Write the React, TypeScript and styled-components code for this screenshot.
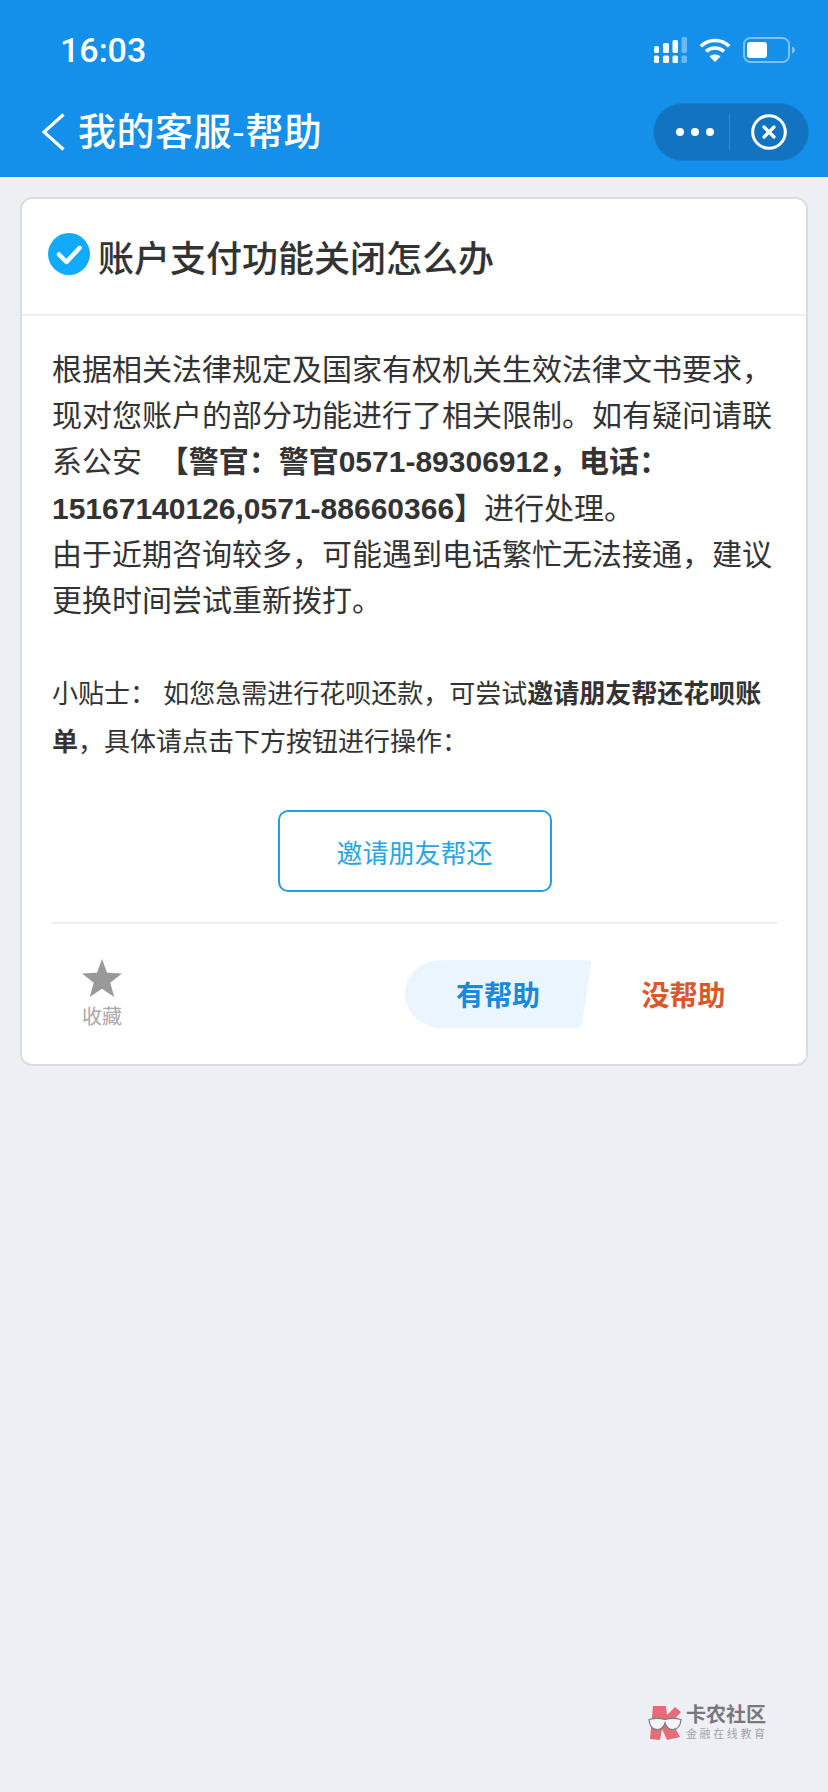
import styled, { createGlobalStyle } from 'styled-components';

const GlobalStyle = createGlobalStyle`
  html, body {
    margin: 0;
    padding: 0;
    background-color: #eeeff5;
  }
  * {
    box-sizing: border-box;
  }
`;

const FONT = `"Liberation Sans", "Noto Sans CJK SC", sans-serif`;

const Page = styled.div`
  position: relative;
  width: 828px;
  height: 1792px;
  overflow: hidden;
  background-color: #eeeff5;
  font-family: ${FONT};
  color: #333333;
`;

const Header = styled.header`
  height: 177px;
  background-color: #1490ea;
  color: #ffffff;
`;

const StatusBar = styled.div`
  height: 100px;
  display: flex;
  align-items: center;
  justify-content: space-between;
  padding: 0 33px 0 60px;
`;

const Time = styled.span`
  font-family: Roboto, sans-serif;
  font-size: 34px;
  font-weight: 500;
`;

const StatusIcons = styled.div`
  display: flex;
  align-items: center;
  gap: 12px;
`;

const NavBar = styled.div`
  height: 77px;
  display: flex;
  align-items: flex-start;
  justify-content: space-between;
  padding: 3px 19px 0 41px;
`;

const NavLeft = styled.div`
  display: flex;
  align-items: center;
  gap: 13px;
  height: 58px;
`;

const NavTitle = styled.h1`
  margin: 0;
  font-size: 38px;
  font-weight: 500;
  letter-spacing: 0.5px;
  line-height: 58px;
`;

const Capsule = styled.div`
  width: 156px;
  height: 58px;
  display: flex;
  align-items: center;
  border-radius: 29px;
  background-color: #1273c1;
  border: 1px solid #1782d6;
`;

const DotsButton = styled.div`
  width: 76px;
  height: 36px;
  display: flex;
  align-items: center;
  justify-content: center;
  gap: 7px;
  padding-left: 7px;
  border-right: 1px solid #2a86cf;
`;

const Dot = styled.i`
  width: 8px;
  height: 8px;
  border-radius: 50%;
  background-color: #ffffff;
`;

const CloseButton = styled.div`
  flex: 1;
  display: flex;
  align-items: center;
  justify-content: center;
`;

const Card = styled.main`
  margin: 20px 20px 0 20px;
  border: 2px solid #dcdde2;
  border-radius: 12px;
  background-color: #ffffff;
`;

const CardTitle = styled.div`
  height: 117px;
  display: flex;
  align-items: center;
  gap: 8px;
  padding: 0 0 2px 26px;
  border-bottom: 2px solid #eeeeee;
`;

const TitleText = styled.h2`
  margin: 0;
  font-size: 36px;
  font-weight: 500;
  color: #333333;
`;

const VerifiedSvg = styled.svg`
  margin-bottom: 3px;
`;

const CardBody = styled.div`
  padding: 31px 29px 0 30px;
`;

const Paragraph = styled.p`
  margin: 0;
  font-size: 30px;
  line-height: 46.2px;
  color: #333333;
`;

const Tips = styled.p`
  margin: 46px 0 0;
  font-size: 26px;
  line-height: 48px;
  color: #333333;
`;

const Strong = styled.b`
  font-weight: 700;
`;

const ActionRow = styled.div`
  display: flex;
  justify-content: center;
  margin-top: 44px;
`;

const InviteButton = styled.div`
  width: 274px;
  height: 82px;
  display: flex;
  align-items: center;
  justify-content: center;
  border: 2px solid #23a0dc;
  border-radius: 10px;
  font-size: 26px;
  color: #2ba5e0;
`;

const Feedback = styled.div`
  display: flex;
  align-items: center;
  justify-content: space-between;
  margin-top: 30px;
  padding: 35px 1px 35px 20px;
  border-top: 2px solid #eeeeee;
`;

const Favorite = styled.div`
  width: 60px;
  display: flex;
  flex-direction: column;
  align-items: center;
  gap: 8px;
  font-size: 20px;
  line-height: 24px;
  color: #a8a8a8;
`;

const Votes = styled.div`
  display: flex;
`;

const Vote = styled.div<{ $active?: boolean }>`
  width: ${(p) => (p.$active ? '186px' : '185px')};
  height: 68px;
  display: flex;
  align-items: center;
  justify-content: center;
  font-size: 28px;
  font-weight: 700;
  color: ${(p) => (p.$active ? '#1a88dc' : '#d9582c')};
  background-color: ${(p) => (p.$active ? '#eaf5fe' : 'transparent')};
  clip-path: ${(p) =>
    p.$active
      ? `path("M38 0 H183 Q187 0 186.4 4 L177 63 Q176 68 171 68 H38 C14 68 0 50 0 34 C0 16 14 0 38 0 Z")`
      : 'none'};
`;

const Watermark = styled.div`
  position: absolute;
  left: 648px;
  top: 1705px;
  display: flex;
  gap: 4px;
  opacity: 0.9;
`;

const WatermarkText = styled.div`
  display: flex;
  flex-direction: column;
`;

const WatermarkName = styled.span`
  font-size: 20px;
  line-height: 20px;
  font-weight: 700;
  color: #6b6b6f;
`;

const WatermarkSlogan = styled.span`
  margin-top: 3px;
  font-size: 11px;
  line-height: 13px;
  letter-spacing: 2.6px;
  color: #9c9ca2;
`;

function SignalIcon() {
  return (
    <svg width="33" height="26" viewBox="0 0 33 26" fill="#fff">
      <rect x="0" y="9" width="5" height="7" rx="1.5" />
      <rect x="9" y="6" width="6" height="10" rx="1.5" />
      <rect x="18.5" y="3" width="5.5" height="13" rx="1.5" />
      <rect x="27.5" y="0" width="5.5" height="16" rx="1.5" fill="#6db8f2" />
      <rect x="0" y="18.5" width="5" height="7.5" rx="1.5" />
      <rect x="9" y="18.5" width="6" height="7.5" rx="1.5" />
      <rect x="18.5" y="18.5" width="5.5" height="7.5" rx="1.5" />
      <rect x="27.5" y="18.5" width="5.5" height="7.5" rx="1.5" fill="#6db8f2" />
    </svg>
  );
}

function WifiIcon() {
  return (
    <svg width="32" height="24" viewBox="0 0 32 24" fill="none" stroke="#fff" strokeWidth="3.6">
      <path d="M1.8 8.2C9.8 .6 22.2 .6 30.2 8.2" />
      <path d="M7 13.4c5-4.6 13-4.6 18 0" />
      <path d="M16 24l-5.4-5.6c3-2.6 7.8-2.6 10.8 0z" fill="#fff" stroke="none" />
    </svg>
  );
}

function BatteryIcon() {
  return (
    <svg width="52" height="26" viewBox="0 0 52 26">
      <rect x="1" y="1" width="45" height="24" rx="6.5" fill="none" stroke="#7fc1f5" strokeWidth="2" />
      <rect x="4" y="5" width="20" height="16" rx="3" fill="#fff" />
      <path d="M49 9.5c1.800.6 3 2 3 3.500s-1.200 2.900-3 3.500z" fill="#7fc1f5" />
    </svg>
  );
}

function BackIcon() {
  return (
    <svg width="24" height="38" viewBox="0 0 24 38" fill="none" stroke="#fff" strokeWidth="3.2">
      <path d="M22.500 1.500 3 19l19.500 17.500" />
    </svg>
  );
}

function CloseIcon() {
  return (
    <svg width="36" height="36" viewBox="0 0 36 36" fill="none" stroke="#fff">
      <circle cx="18" cy="18" r="16.300" strokeWidth="3" />
      <path d="M13 13l10 10M23 13 13 23" strokeWidth="3.200" strokeLinecap="round" />
    </svg>
  );
}

function VerifiedIcon() {
  return (
    <VerifiedSvg width="42" height="42" viewBox="0 0 42 42">
      <circle cx="21" cy="21" r="21" fill="#12aaff" />
      <path d="M11 21.500l7.500 7.500L31.500 15" fill="none" stroke="#fff" strokeWidth="4.500" strokeLinecap="round" strokeLinejoin="round" />
    </VerifiedSvg>
  );
}

function StarIcon() {
  return (
    <svg width="40" height="38" viewBox="0 0 40 38" fill="#999999">
      <path d="M20 0l5 13.800 15 .7-11.800 9.200L32.300 38 20 29.800 7.700 38l4.100-14.300L0 14.500l15-.7z" />
    </svg>
  );
}

function LogoMark() {
  return (
    <svg width="34" height="36" viewBox="0 0 34 36">
      <path d="M5 1h13l1 9 8-8 6 5-9 10 8 15-13 3-5-11-2 11-10-1z" fill="#e55f6c" />
      <path d="M1 14.500c5-1.500 11-1.500 16 0 5-1.500 11-1.500 16 0-.5 6-3.500 10-8.500 10-4 0-6.500-3-7.500-6.500-1 3.500-3.500 6.500-7.500 6.500-5 0-8-4-8.500-10z" fill="#f6f6f8" stroke="#6f6f73" strokeWidth="1.200" />
    </svg>
  );
}

export default function App() {
  return (
    <Page>
      <GlobalStyle />
      <Header>
        <StatusBar>
          <Time>16:03</Time>
          <StatusIcons>
            <SignalIcon />
            <WifiIcon />
            <BatteryIcon />
          </StatusIcons>
        </StatusBar>
        <NavBar>
          <NavLeft>
            <BackIcon />
            <NavTitle>我的客服-帮助</NavTitle>
          </NavLeft>
          <Capsule>
            <DotsButton>
              <Dot />
              <Dot />
              <Dot />
            </DotsButton>
            <CloseButton>
              <CloseIcon />
            </CloseButton>
          </Capsule>
        </NavBar>
      </Header>

      <Card>
        <CardTitle>
          <VerifiedIcon />
          <TitleText>账户支付功能关闭怎么办</TitleText>
        </CardTitle>
        <CardBody>
          <Paragraph>
            根据相关法律规定及国家有权机关生效法律文书要求，现对您账户的部分功能进行了相关限制。如有疑问请联系公安&nbsp;&nbsp;
            <Strong>【警官：警官0571-89306912，电话：15167140126,0571-88660366】</Strong>进行处理。
            <br />
            由于近期咨询较多，可能遇到电话繁忙无法接通，建议更换时间尝试重新拨打。
          </Paragraph>
          <Tips>
            小贴士：&nbsp;如您急需进行花呗还款，可尝试<Strong>邀请朋友帮还花呗账单</Strong>，具体请点击下方按钮进行操作：
          </Tips>
          <ActionRow>
            <InviteButton>邀请朋友帮还</InviteButton>
          </ActionRow>
          <Feedback>
            <Favorite>
              <StarIcon />
              收藏
            </Favorite>
            <Votes>
              <Vote $active>有帮助</Vote>
              <Vote>没帮助</Vote>
            </Votes>
          </Feedback>
        </CardBody>
      </Card>

      <Watermark>
        <LogoMark />
        <WatermarkText>
          <WatermarkName>卡农社区</WatermarkName>
          <WatermarkSlogan>金融在线教育</WatermarkSlogan>
        </WatermarkText>
      </Watermark>
    </Page>
  );
}
